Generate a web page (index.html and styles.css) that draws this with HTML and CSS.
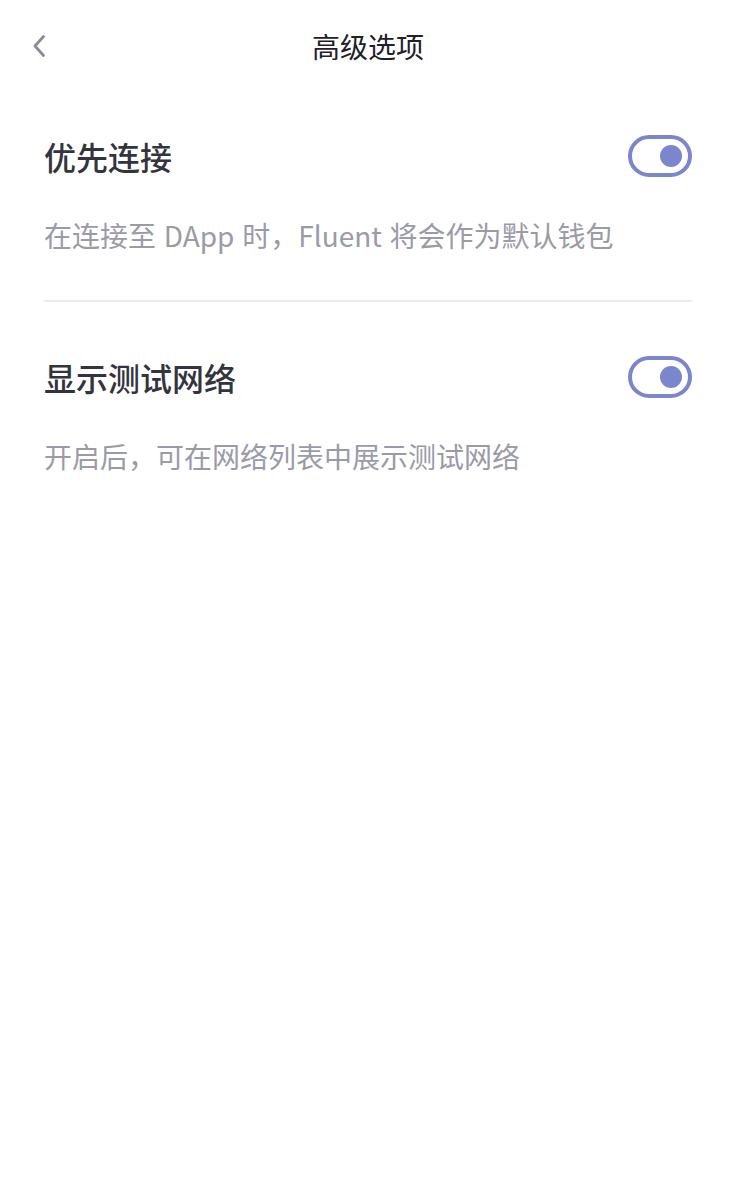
FILE: index.html
```html
<!DOCTYPE html>
<html lang="zh-CN">
<head>
<meta charset="utf-8">
<title>高级选项</title>
<link rel="stylesheet" href="styles.css">
</head>
<body>
<div class="page">
  <header class="header">
    <button class="back" aria-label="返回">
      <svg width="14" height="24" viewBox="0 0 14 24"><path d="M11.5 2.5 L3 12 L11.5 21.5" fill="none" stroke="#8a8c99" stroke-width="2.8" stroke-linecap="round" stroke-linejoin="round"/></svg>
    </button>
    <h1 class="title">高级选项</h1>
  </header>
  <section class="section">
    <div class="row">
      <h2 class="label">优先连接</h2>
      <span class="toggle"><span class="knob"></span></span>
    </div>
    <p class="desc">在连接至 DApp 时，Fluent 将会作为默认钱包</p>
  </section>
  <section class="section">
    <div class="row">
      <h2 class="label">显示测试网络</h2>
      <span class="toggle"><span class="knob"></span></span>
    </div>
    <p class="desc">开启后，可在网络列表中展示测试网络</p>
  </section>
</div>
</body>
</html>
```

FILE: styles.css
```css
* { box-sizing: border-box; }
html, body { margin: 0; padding: 0; background: #ffffff; }
body {
  font-family: "Noto Sans CJK SC", "Noto Sans", sans-serif;
  width: 736px;
  height: 1188px;
}
.page { padding: 0 44px; }
.header {
  position: relative;
  height: 92px;
  display: flex;
  align-items: center;
  justify-content: center;
}
.back {
  position: absolute;
  left: -12px;
  top: 34px;
  border: 0;
  background: none;
  padding: 0;
  width: 14px;
  height: 24px;
  display: flex;
}
.title {
  margin: 0;
  font-size: 28px;
  font-weight: 400;
  color: #1f2028;
  line-height: 36px;
}
.section { padding: 43px 0 47px; }
.section + .section {
  border-top: 2px solid #ebebee;
  padding-top: 54px;
}
.row {
  display: flex;
  align-items: center;
  justify-content: space-between;
  height: 42px;
}
.label {
  margin: 0;
  font-size: 32px;
  font-weight: 500;
  color: #33343d;
  line-height: 42px;
}
.toggle {
  width: 64px;
  height: 42px;
  border: 4px solid #7b86cd;
  border-radius: 21px;
  display: flex;
  align-items: center;
  justify-content: flex-end;
  padding-right: 6px;
}
.knob {
  width: 22px;
  height: 22px;
  border-radius: 50%;
  background: #7b86cd;
}
.desc {
  margin: 40px 0 0;
  font-size: 28px;
  line-height: 36px;
  color: #9a9ba6;
  word-spacing: 1.5px;
}
```
